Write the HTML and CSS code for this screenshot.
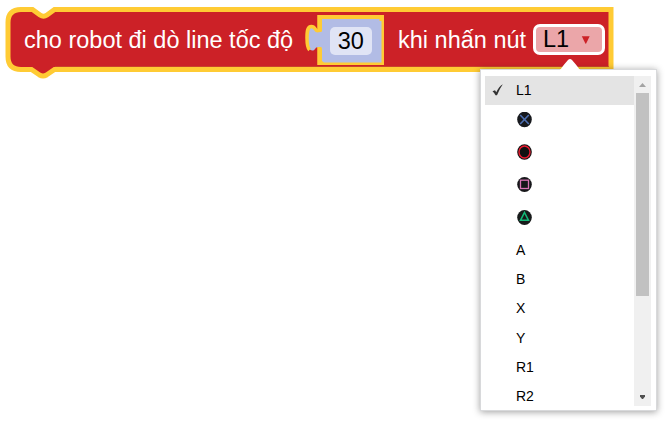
FILE: index.html
```html
<!DOCTYPE html>
<html lang="vi">
<head>
<meta charset="utf-8">
<title>Robot block</title>
<link rel="stylesheet" href="styles.css">
</head>
<body>
<main class="workspace">
  <div class="block">
    <svg class="block-shape" width="620" height="85" viewBox="0 0 620 85">
      <path d="M21 9.500H32.500L40 15Q43.500 17.500 47 15L54.500 9.500H611V69.500H54.500L46.500 75Q43 77 39.500 75L31.500 69.500H21Q8 69.500 8 56.500V22.500Q8 9.500 21 9.500Z" fill="#cc2127" stroke="#ffcb34" stroke-width="5"/>
      <path d="M55 66.500H608.500" stroke="#c9442a" stroke-width="1"/>
      <rect x="317.500" y="15" width="66.500" height="50" fill="#ffcb34"/>
      <path d="M319 29.500C315 31.500 316 26.500 311.500 26.500C307.500 26.500 307 31 307 38C307 47 308.500 49.500 312 50.500C316 51 315 45 319 48Z" fill="#b2bce5"/>
      <path d="M319 30.500C315 32.500 316 26.500 311.500 26.500C307.500 26.500 307 31 307 38C307 45 307.500 48 309.500 50" fill="none" stroke="#ffcb34" stroke-width="3.500"/>
      <path d="M322 19H379.500V21H381.500V62.500H324L322 61V48.500L317.500 47V33L322 31Z" fill="#b2bce5"/>
      <path d="M319.500 15V32M319.500 47V65" stroke="#ffcb34" stroke-width="4"/>
    </svg>
    <span class="label lead">cho robot đi dò line tốc độ</span>
    <span class="number">30</span>
    <span class="label tail">khi nhấn nút</span>
    <div class="dropdown"><span class="value">L1</span><svg width="10" height="8" viewBox="0 0 10 8"><path d="M.8.300H8.700L5 7.800H4.500Z" fill="#cc2127"/></svg></div>
  </div>

  <div class="menu">
    <svg class="pointer" width="28" height="14" viewBox="0 0 28 14"><path d="M1 14C4 13 5 10 12 2Q14 0 16 2C23 10 24 13 27 14Z" fill="#fff"/></svg>
    <ul class="items">
      <li class="selected"><svg class="check" width="12" height="12" viewBox="0 0 12 12"><path d="M.5 7.200L3 6.200L4.300 8.300Q7 2.500 10.800.300Q7.500 5 5 11.300H3.500Q2.300 8.500.500 7.200Z" fill="#333"/></svg>L1</li>
      <li class="picture"><svg width="16" height="16" viewBox="0 0 16 16"><ellipse cx="7.500" cy="7.500" rx="7.300" ry="7.800" fill="#17191d"/><path d="M3.200 3L11.800 12M11.800 3L3.200 12" stroke="#4e70b2" stroke-width="1.600"/></svg></li>
      <li class="picture"><svg width="16" height="16" viewBox="0 0 16 16"><ellipse cx="7.500" cy="8" rx="7.300" ry="7.800" fill="#111"/><ellipse cx="7.500" cy="8" rx="5.500" ry="6" fill="none" stroke="#ed1c32" stroke-width="1.400"/></svg></li>
      <li class="picture"><svg width="16" height="16" viewBox="0 0 16 16"><ellipse cx="7.500" cy="7.500" rx="7.300" ry="7.500" fill="#17171a"/><rect x="3.500" y="3.200" width="8" height="8.300" fill="none" stroke="#d873b4" stroke-width="1.300"/></svg></li>
      <li class="picture"><svg width="16" height="16" viewBox="0 0 16 16"><ellipse cx="7.500" cy="7.500" rx="7.300" ry="7.500" fill="#171a1a"/><path d="M7.500 2.500L11.500 10.300H3.500Z" fill="none" stroke="#13b878" stroke-width="1.500"/></svg></li>
      <li>A</li>
      <li>B</li>
      <li>X</li>
      <li>Y</li>
      <li>R1</li>
      <li>R2</li>
    </ul>
    <div class="scrollbar">
      <svg width="17" height="17" viewBox="0 0 17 17"><path d="M5 11L8.500 7L12 11Z" fill="#a3a3a3"/></svg>
      <div class="thumb"></div>
      <svg class="down" width="17" height="17" viewBox="0 0 17 17"><path d="M6 6H11V7.500L9 10H8L6 7.500Z" fill="#505050"/></svg>
    </div>
  </div>
</main>
</body>
</html>
```

FILE: styles.css
```css
* {
  box-sizing: border-box;
}

body {
  margin: 0;
  background: #fff;
  font-family: "Liberation Sans", Arial, sans-serif;
}

.workspace {
  position: relative;
  width: 669px;
  height: 421px;
  overflow: hidden;
}

.block {
  position: relative;
  display: flex;
  align-items: center;
  width: 613px;
  height: 79px;
  padding-left: 24px;
  color: #fff;
  font-size: 23.500px;
  white-space: nowrap;
}

.block-shape {
  position: absolute;
  left: 0;
  top: 0;
}

.label {
  position: relative;
  line-height: 28px;
}

.lead {
  width: 305.500px;
}

.number {
  position: relative;
  width: 42.500px;
  height: 28px;
  margin-top: 3px;
  border-radius: 5px;
  background: #e0e4f5;
  color: #000;
  line-height: 29px;
  text-align: center;
}

.tail {
  width: 135px;
  margin-left: 26px;
}

.dropdown {
  position: relative;
  display: flex;
  align-items: center;
  width: 72px;
  height: 31px;
  padding-left: 7px;
  border: 3px solid #fff;
  border-radius: 7px;
  background: #eba6a9;
  color: #000;
}

.value {
  width: 37.500px;
}

.menu {
  position: absolute;
  left: 481px;
  top: 70px;
  display: flex;
  width: 175px;
  height: 340px;
  padding: 6px 5px 4px 4px;
  background: #fff;
  box-shadow: 0 0 0 1px #d8d9db, 0 1px 7px 1px rgba(0, 0, 0, .38);
}

.pointer {
  position: absolute;
  left: 75px;
  top: -12px;
}

.items {
  width: 149px;
  margin: 0;
  padding: 0;
  list-style: none;
  color: #000;
  font-size: 14px;
}

.items li {
  position: relative;
  height: 29.100px;
  padding-left: 31px;
  line-height: 31px;
}

.items .selected {
  height: 28.500px;
  line-height: 29px;
  background: #e4e4e4;
}

.items .picture {
  height: 32.700px;
  padding: 7px 0 0 32px;
}

.picture svg {
  display: block;
}

.check {
  position: absolute;
  left: 7px;
  top: 8px;
}

.scrollbar {
  display: flex;
  flex-direction: column;
  width: 17px;
  background: #f0f0f0;
}

.thumb {
  width: 13px;
  height: 203px;
  margin: 0 2px;
  background: #c1c1c1;
}

.down {
  margin-top: auto;
}
```
